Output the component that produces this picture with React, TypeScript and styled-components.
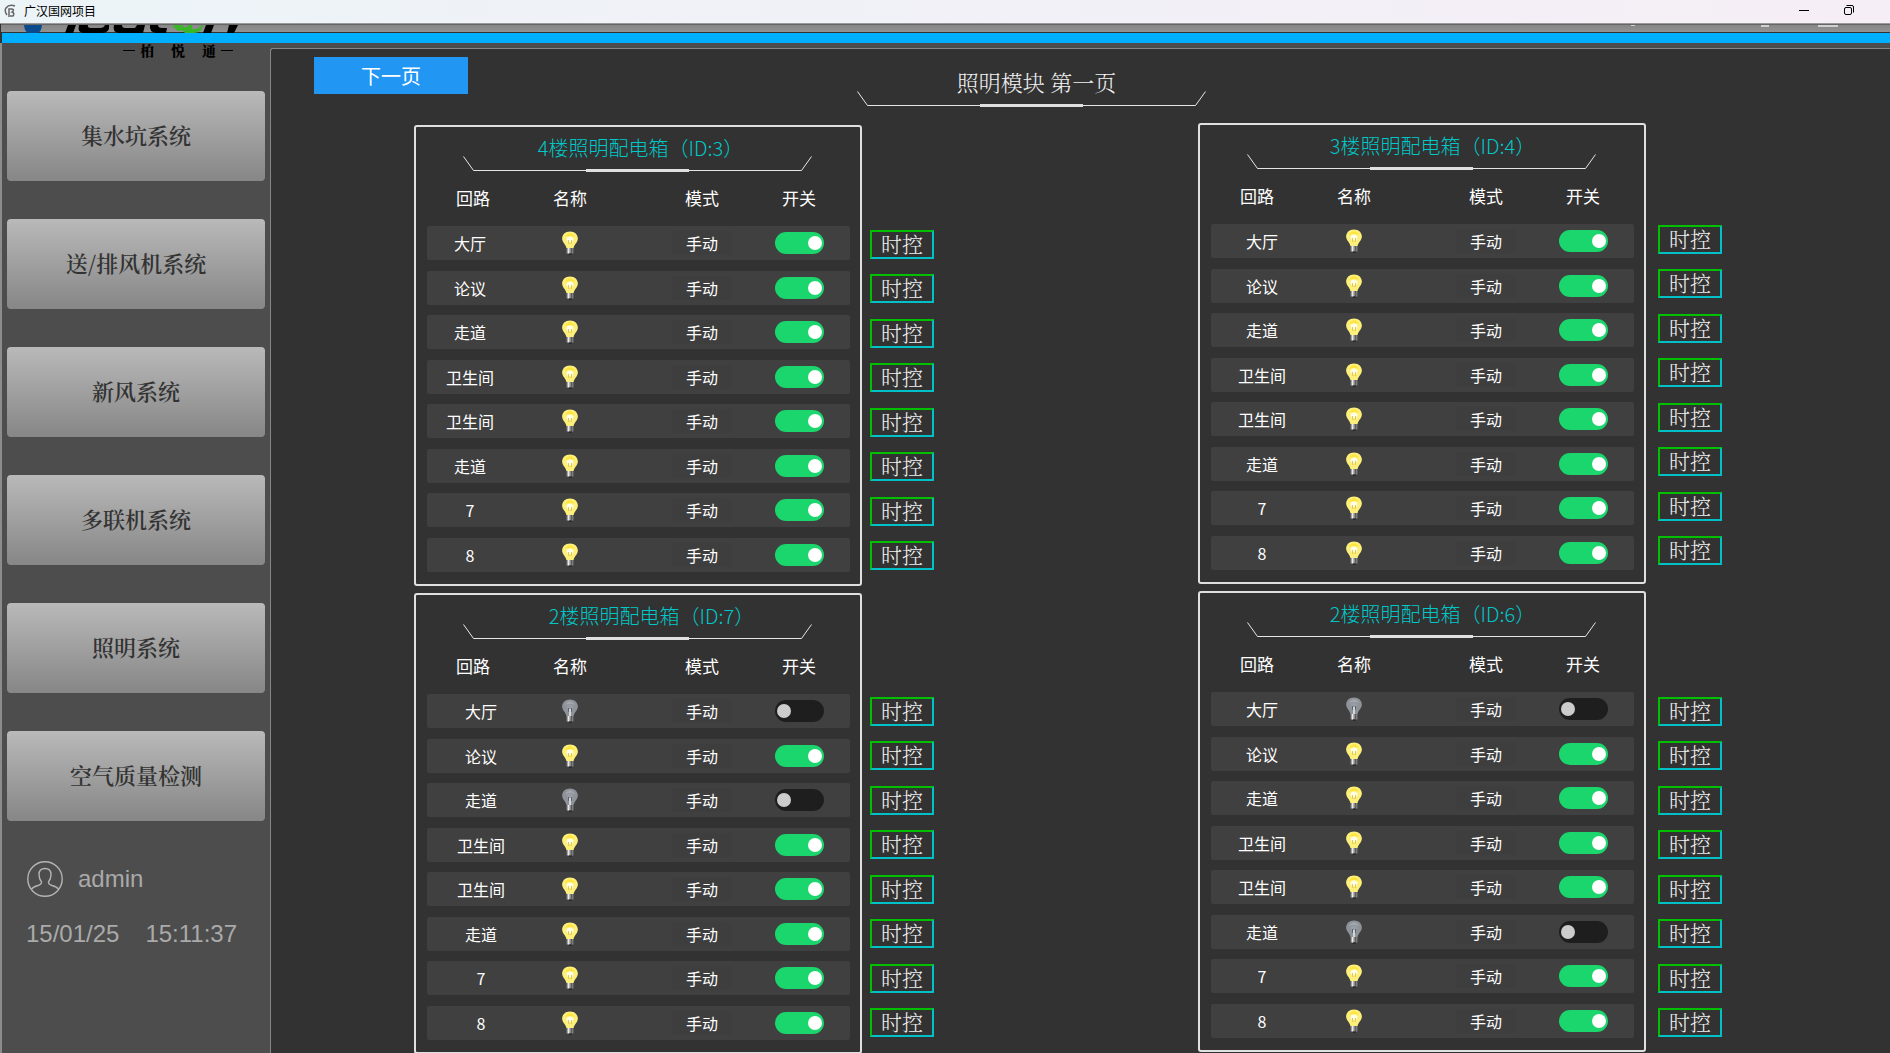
import React from "react";
import styled, { createGlobalStyle } from "styled-components";

const sans = `"Noto Sans CJK SC", sans-serif`;
const song = `SimSun, "Noto Serif CJK SC", "Noto Sans CJK SC", serif`;

const GlobalStyle = createGlobalStyle`
  *, *::before, *::after { box-sizing: border-box; }
  body { margin: 0; background: #323232; font-family: ${sans}; overflow: hidden; }
  button { font: inherit; cursor: pointer; }
`;

const Window = styled.div`
  display: flex;
  flex-direction: column;
  height: 100vh;
  overflow: hidden;
`;

const TitleBar = styled.header`
  display: flex;
  align-items: center;
  flex: none;
  height: 24px;
  padding: 0 35px 2px 4px;
  gap: 8px;
  background: linear-gradient(90deg, #ecf4f8, #f6eef6);
  border-bottom: 1px solid #9a9a9a;
  color: #000;
  font-size: 12px;
  line-height: 18px;
`;

const WindowButtons = styled.div`
  display: flex;
  gap: 34px;
  margin-left: auto;
`;

const WindowButton = styled.button`
  display: flex;
  padding: 0;
  border: 0;
  background: none;
`;

const Banner = styled.div`
  display: flex;
  justify-content: space-between;
  flex: none;
  height: 9px;
  margin-left: 1px;
  padding: 0 52px 0 23px;
  background: linear-gradient(#868686, #929292);
  border-top: 1px solid #666;
  border-bottom: 1px solid #333;
`;

const BlueStripe = styled.div`
  flex: none;
  height: 10px;
  margin-left: 2px;
  background: #00b0ff;
`;

const Body = styled.div`
  display: flex;
  flex: 1;
  min-height: 0;
  background: #4d4d4d;
  border-left: 2px solid #8c8c8c;
`;

const Sidebar = styled.aside`
  flex: none;
  width: 268px;
  padding: 0 5px;
`;

const Brand = styled.div`
  display: flex;
  align-items: flex-start;
  gap: 5px;
  height: 48px;
  padding-left: 116px;
  color: #000;
  font-family: ${song};
  font-size: 14px;
  font-weight: 900;
  line-height: 14px;
`;

const BrandName = styled.span`
  display: flex;
  gap: 17px;
`;

const BrandDash = styled.i`
  width: 12px;
  height: 1px;
  margin-top: 7px;
  background: #000;
`;

const Nav = styled.nav`
  display: flex;
  flex-direction: column;
  gap: 38px;
`;

const NavButton = styled.button`
  height: 90px;
  padding: 0 0 4px;
  border: 0;
  border-radius: 4px;
  background: linear-gradient(#b9b9b9, #868686);
  color: #333;
  font-family: ${song};
  font-size: 22px;
  font-weight: 600;
`;

const UserRow = styled.div`
  display: flex;
  align-items: center;
  gap: 15px;
  height: 36px;
  margin: 40px 0 0 20px;
  color: #aaa;
  font-family: "Liberation Sans", sans-serif;
  font-size: 24px;
`;

const Clock = styled.div`
  display: flex;
  gap: 26px;
  margin: 23px 0 0 19px;
  color: #aaa;
  font-family: "Liberation Sans", sans-serif;
  font-size: 24px;
  line-height: 28px;
`;

const Main = styled.main`
  flex: 1;
  min-width: 0;
  margin-top: 5px;
  background: #323232;
  border: solid #868686;
  border-width: 1px 0 0 1px;
  border-top-left-radius: 3px;
`;

const PageHeader = styled.div`
  display: flex;
  align-items: flex-start;
  height: 74px;
  padding: 8px 0 0 43px;
`;

const NextButton = styled.button`
  width: 154px;
  height: 37px;
  padding: 0;
  border: 0;
  background: #2196f3;
  color: #fff;
  font-size: 20px;
`;

const PageTitle = styled.div`
  display: grid;
  width: 349px;
  height: 50px;
  margin-left: 389px;
  padding-top: 9px;
`;

const PageTitleText = styled.h1`
  grid-area: 1 / 1;
  margin: 0;
  padding-left: 10px;
  color: #f0f0f0;
  font-family: ${song};
  font-size: 22px;
  font-weight: 300;
  line-height: 32px;
  text-align: center;
`;

const Boards = styled.div`
  display: grid;
  grid-template-columns: 784fr 692fr;
  padding-left: 143px;
`;

const BoardColumn = styled.div<{ $top: number }>`
  display: flex;
  flex-direction: column;
  gap: 7px;
  padding-top: ${(p) => p.$top}px;
`;

const Board = styled.section<{ $gap: number }>`
  display: flex;
  align-items: flex-start;
  gap: ${(p) => p.$gap}px;
`;

const Panel = styled.table`
  display: block;
  width: 448px;
  padding: 0 10px 12px 11px;
  border: 2px solid #e0e0e0;
  border-radius: 3px;
  color: #fff;
`;

const PanelCaption = styled.caption`
  display: grid;
  justify-content: center;
  justify-items: center;
  height: 45px;
  padding: 7px 2px 0 0;
`;

const PanelTitle = styled.span<{ $indent: number }>`
  grid-area: 1 / 1;
  padding-left: ${(p) => p.$indent}px;
  color: #00c8c8;
  font-size: 20px;
  font-weight: 300;
  line-height: 28px;
  white-space: nowrap;
`;

const UnderlineSvg = styled.svg`
  grid-area: 1 / 1;
  align-self: end;
  display: block;
`;

const Head = styled.thead`
  display: block;
`;

const Rows = styled.tbody`
  display: flex;
  flex-direction: column;
  gap: 10px;
`;

const Row = styled.tr`
  display: grid;
  grid-template-columns: minmax(0, 92fr) minmax(0, 102fr) minmax(0, 130fr) minmax(0, 99fr);
  align-items: center;
`;

const HeadRow = styled(Row)`
  height: 54px;
  padding-bottom: 2px;
  font-size: 17px;
  line-height: 26px;
`;

const DataRow = styled(Row)`
  height: 34px;
  border-radius: 2px;
  background: #404040;
  font-size: 16px;
  line-height: 24px;
  &:nth-child(odd):not(:last-child) { margin-bottom: 1px; }
`;

const HeadCell = styled.th`
  padding: 0;
  font-weight: 400;
  text-align: center;
  &:nth-child(3) { padding-left: 32px; }
  &:nth-child(4) { padding-right: 3px; }
`;

const Cell = styled.td`
  display: flex;
  justify-content: center;
  padding: 0;
  &:nth-child(3) { padding-left: 32px; }
  &:nth-child(4) { padding-right: 3px; }
`;

const NameCell = styled(Cell)`
  justify-content: flex-start;
`;

const Name = styled.span<{ $width: number }>`
  flex: none;
  width: ${(p) => p.$width}px;
  text-align: center;
`;

const Mode = styled.span`
  width: 60px;
  background: #3e3e3e;
  text-align: center;
`;

const Switch = styled.input`
  appearance: none;
  display: flex;
  align-items: center;
  width: 49px;
  height: 22px;
  margin: 0;
  padding: 0 2px;
  border-radius: 11px;
  background: #1e1e1e;
  cursor: pointer;
  &::before {
    content: "";
    width: 14px;
    height: 14px;
    border-radius: 50%;
    background: #ccc;
  }
  &:checked { background: #1bd66c; justify-content: flex-end; }
  &:checked::before { background: #fff; }
`;

const Timers = styled.div<{ $top: number }>`
  display: flex;
  flex-direction: column;
  gap: 15px;
  padding-top: ${(p) => p.$top}px;
`;

const TimerButton = styled.button`
  width: 64px;
  height: 29px;
  padding: 0 0 3px;
  border: 2px solid;
  border-color: #00c000 #00c0c8 #00c0c8 #00c000;
  background: none;
  color: #f0f0f0;
  font-family: ${song};
  font-size: 21px;
  font-weight: 300;
  line-height: 22px;
  &:nth-child(even):not(:last-child) { margin-bottom: 1px; }
`;

const Underline = () => (
  <UnderlineSvg width="349" height="16" viewBox="0 0 349 16" fill="none" aria-hidden="true">
    <path d="M0.5 0.5 L10.5 14.5 H338.5 L348.5 0.5" stroke="#e6e6e6" />
    <rect x="123" y="13" width="103" height="3" fill="#e0e0e0" />
  </UnderlineSvg>
);

const Bulb = ({ on }: { on: boolean }) => (
  <svg width="18" height="24" viewBox="0 0 16 24" preserveAspectRatio="none" aria-hidden="true">
    <path
      d="M8 0.5 C3.6 0.5 1 3.8 1 7.6 C1 11.5 4.2 13.2 4.8 17 H11.2 C11.8 13.2 15 11.5 15 7.6 C15 3.8 12.4 0.5 8 0.5Z"
      fill={on ? "#fdf07a" : "#8e9299"}
    />
    <path d="M3.5 6 Q8 -1.5 12.5 6 Q8 4 3.5 6Z" fill={on ? "#ffe53b" : "#a3a7ae"} />
    <circle cx="8" cy="8.5" r="3" fill={on ? "#fffde8" : "#989ca4"} />
    <path d="M7 13 L6.5 9 M9 13 L9.5 9" stroke={on ? "#d8b93a" : "#4c4f55"} strokeWidth="0.8" />
    {!on && <path d="M8 10 V18" stroke="#e4e8ee" strokeWidth="1.4" />}
    <rect x="5" y="17" width="6" height="5.5" fill="#8b8b8b" />
    <rect x="6" y="17" width="1.5" height="5.5" fill="#e8e8e8" />
    <rect x="9" y="17" width="1" height="5.5" fill="#555" />
    <rect x="7" y="22.5" width="2.5" height="1.2" fill="#222" />
  </svg>
);

const names = ["大厅", "论议", "走道", "卫生间", "卫生间", "走道", "7", "8"];

type BoardData = {
  title: string;
  off: number[];
  indent: number;
  nameWidth: number;
  gap: number;
  timersTop: number;
};

const left: BoardData[] = [
  { title: "4楼照明配电箱（ID:3）", off: [], indent: 6, nameWidth: 86, gap: 8, timersTop: 105 },
  { title: "2楼照明配电箱（ID:7）", off: [0, 2], indent: 28, nameWidth: 108, gap: 8, timersTop: 104 },
];
const right: BoardData[] = [
  { title: "3楼照明配电箱（ID:4）", off: [], indent: 22, nameWidth: 102, gap: 12, timersTop: 102 },
  { title: "2楼照明配电箱（ID:6）", off: [0, 5], indent: 22, nameWidth: 102, gap: 12, timersTop: 106 },
];

const LightingBoard = ({ data }: { data: BoardData }) => (
  <Board $gap={data.gap}>
    <Panel>
      <PanelCaption>
        <PanelTitle $indent={data.indent}>{data.title}</PanelTitle>
        <Underline />
      </PanelCaption>
      <Head>
        <HeadRow>
          <HeadCell>回路</HeadCell>
          <HeadCell>名称</HeadCell>
          <HeadCell>模式</HeadCell>
          <HeadCell>开关</HeadCell>
        </HeadRow>
      </Head>
      <Rows>
        {names.map((name, i) => {
          const on = !data.off.includes(i);
          return (
            <DataRow key={i}>
              <NameCell><Name $width={data.nameWidth}>{name}</Name></NameCell>
              <Cell><Bulb on={on} /></Cell>
              <Cell><Mode>手动</Mode></Cell>
              <Cell><Switch type="checkbox" defaultChecked={on} aria-label={name} /></Cell>
            </DataRow>
          );
        })}
      </Rows>
    </Panel>
    <Timers $top={data.timersTop}>
      {names.map((_, i) => <TimerButton key={i} type="button">时控</TimerButton>)}
    </Timers>
  </Board>
);

export default function App() {
  return (
    <Window>
      <GlobalStyle />
      <TitleBar>
        <svg width="12" height="14" viewBox="0 0 12 14" fill="none" stroke="#666" strokeWidth="1.5">
          <path d="M3 11 Q0 7 2 4 Q5 0 11 2 M5 13 V5 H8 Q11 6 8 8 Q11 9 9 12 H6" />
        </svg>
        <span>广汉国网项目</span>
        <WindowButtons>
          <WindowButton type="button" aria-label="minimize">
            <svg width="11" height="11"><path d="M0 5.5 H10" stroke="#000" /></svg>
          </WindowButton>
          <WindowButton type="button" aria-label="restore">
            <svg width="11" height="11" fill="none" stroke="#000">
              <rect x="0.5" y="2.5" width="7" height="7" rx="1.5" />
              <path d="M2.5 0.5 H8 Q9.5 0.5 9.5 2 V7.5" />
            </svg>
          </WindowButton>
        </WindowButtons>
      </TitleBar>
      <Banner>
        <svg width="216" height="8" viewBox="0 0 216 8" overflow="visible" aria-hidden="true">
          <path d="M0 0 H18 Q17 8 13 8 H5 Q1 8 0 0Z" fill="#0b4a8c" />
          <g fill="#000">
            <path d="M44 0 H52 L49 8 H41Z" />
            <path d="M55 0 H64 Q63 3 67 3 H76 Q80 3 81 0 H85 V4 Q83 8 78 8 H60 Q53 8 55 0Z" />
            <path d="M90 0 H98 Q98 3 101 3 H111 L113 0 H121 L119 8 H95 Q88 7 90 0Z" />
            <path d="M126 0 H134 Q134 3 138 3 H143 L142 8 H132 Q125 7 126 0Z" />
            <path d="M182 0 H190 L187 8 H179Z" />
            <path d="M205 0 H214 L210 8 H203Z" />
          </g>
          <path d="M149 0 H158 L161 3 L165 0 H168 V4 H172 Q176 3 178 0 H179 Q177 8 170 8 H161 L158 5 L155 6 Q150 4 149 0Z" fill="#3ab527" />
        </svg>
        <svg width="207" height="8" viewBox="0 0 207 8" aria-hidden="true">
          <path d="M0 0 H4 M130 1 H138 M187 1 H207" stroke="#d0d0d0" strokeWidth="2" />
        </svg>
      </Banner>
      <BlueStripe />
      <Body>
        <Sidebar>
          <Brand>
            <BrandDash />
            <BrandName><span>柏</span><span>悦</span><span>通</span></BrandName>
            <BrandDash />
          </Brand>
          <Nav>
            {["集水坑系统", "送/排风机系统", "新风系统", "多联机系统", "照明系统", "空气质量检测"].map((t) => (
              <NavButton key={t} type="button">{t}</NavButton>
            ))}
          </Nav>
          <UserRow>
            <svg width="36" height="36" viewBox="0 0 36 36" fill="none" stroke="#b4b4b4" strokeWidth="1.4">
              <circle cx="18" cy="18" r="17.2" />
              <path d="M4.5 28 Q6 26 11 24.5 Q15 23 14.5 21 Q12 18 12 13.5 Q12 7.5 18 7.5 Q24 7.5 24 13.5 Q24 18 21.5 21 Q21 23 25 24.5 Q30 26 31.5 28" />
            </svg>
            <span>admin</span>
          </UserRow>
          <Clock><span>15/01/25</span><span>15:11:37</span></Clock>
        </Sidebar>
        <Main>
          <PageHeader>
            <NextButton type="button">下一页</NextButton>
            <PageTitle>
              <PageTitleText>照明模块 第一页</PageTitleText>
              <Underline />
            </PageTitle>
          </PageHeader>
          <Boards>
            <BoardColumn $top={2}>{left.map((d) => <LightingBoard key={d.title} data={d} />)}</BoardColumn>
            <BoardColumn $top={0}>{right.map((d) => <LightingBoard key={d.title} data={d} />)}</BoardColumn>
          </Boards>
        </Main>
      </Body>
    </Window>
  );
}
